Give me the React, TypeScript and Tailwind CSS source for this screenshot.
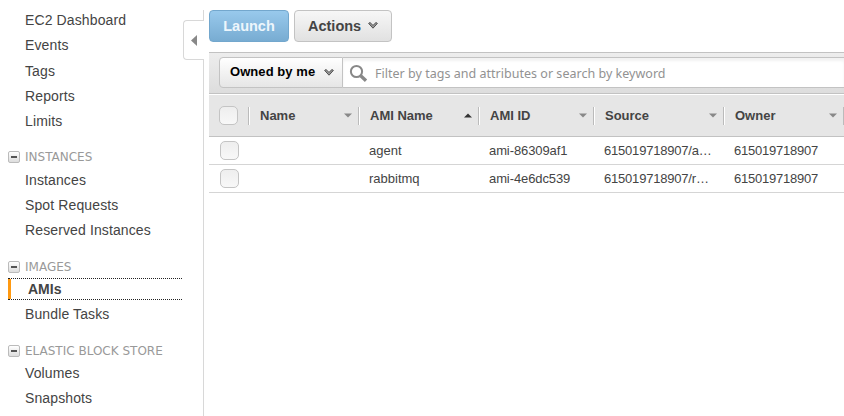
import React from "react";

function Item({ children, gap = "h-[25px]", tracking = "tracking-[.12px]" }: { children: React.ReactNode; gap?: string; tracking?: string }) {
  return <a className={`flex items-center pl-[25px] text-[14px] text-[#444] ${tracking} ${gap}`}>{children}</a>;
}

function Group({ title }: { title: string }) {
  return (
    <div className="flex h-[24px] items-center pl-2">
      <span className="flex size-3 items-center justify-center rounded-[2px] border border-[#bbb] bg-linear-to-b from-white to-[#ddd]">
        <span className="h-[2px] w-[6px] bg-[#555]" />
      </span>
      <span className="ml-[5px] font-['DejaVu_Sans',sans-serif] text-[12px] leading-none text-[#999]">{title}</span>
    </div>
  );
}

function Chevron() {
  return (
    <svg width="10" height="7" viewBox="0 0 10 7" className="-mt-px block">
      <path d="M.6 1.4 2 .5 5 3.4 8 .5l1.4.9L5 6.2z" fill="#999" stroke="#444" strokeWidth=".9" />
    </svg>
  );
}

function Sort({ up = false }: { up?: boolean }) {
  return (
    <svg width="8" height="5" viewBox="0 0 8 5" className="mr-[6px] block">
      {up ? <path d="M0 4.5h8L4 .5z" fill="#333" /> : <path d="M0 .5h8L4 4.5z" fill="#888" />}
    </svg>
  );
}

function Check() {
  return <span className="block size-[19px] rounded-[5px] border border-[#c4c4c4] bg-linear-to-b from-[#eee] to-[#f8f8f8]" />;
}

function Head({ label, width, up }: { label: string; width: string; up?: boolean }) {
  return (
    <div className={`flex h-[18px] shrink-0 items-center justify-between border-l border-[#bbb] pl-[11px] shadow-[inset_1px_0_#fff] ${width}`}>
      <span>{label}</span>
      <Sort up={up} />
    </div>
  );
}

function Row({ name, id, source }: { name: string; id: string; source: string }) {
  return (
    <div className="flex h-[28px] items-center border-b border-[#d5d5d5] pl-[11px] text-[13px] text-[#444]">
      <div className="w-[149px]"><Check /></div>
      <span className="w-[120px]">{name}</span>
      <span className="w-[115px] tracking-[-.1px]">{id}</span>
      <span className="w-[130px] tracking-[-.2px]">{source}</span>
      <span className="tracking-[-.23px]">615019718907</span>
    </div>
  );
}

export default function App() {
  return (
    <div className="flex h-[416px] w-[844px] overflow-hidden bg-white font-['Liberation_Sans',Arial,sans-serif]">
      <aside className="flex h-full w-[204px] shrink-0">
        <nav className="w-[183px] shrink-0 pt-[8px]">
          <Item>EC2 Dashboard</Item>
          <Item>Events</Item>
          <div className="h-px" />
          <Item>Tags</Item>
          <Item>Reports</Item>
          <Item>Limits</Item>
          <div className="h-[11px]" />
          <Group title="INSTANCES" />
          <div className="-mt-px"><Item>Instances</Item></div>
          <Item>Spot Requests</Item>
          <Item>Reserved Instances</Item>
          <div className="h-[12px]" />
          <Group title="IMAGES" />
          <div className="-mt-px ml-2 mr-px h-[22px] border-y border-dotted border-[#222]">
            <a className="flex h-[20px] items-center border-l-[3px] border-[#ff9911] pl-[17px] text-[14px] font-bold text-[#444]">AMIs</a>
          </div>
          <div className="h-[2px]" />
          <Item>Bundle Tasks</Item>
          <div className="h-[12px]" />
          <Group title="ELASTIC BLOCK STORE" />
          <div className="-mt-[2px]"><Item>Volumes</Item></div>
          <Item>Snapshots</Item>
        </nav>
        <div className="flex w-[21px] flex-col pt-[10px]">
          <div className="h-[10px] shrink-0 border-r border-[#d8d8d8]" />
          <div className="flex h-[40px] shrink-0 items-center rounded-l-[4px] border border-r-0 border-[#d8d8d8] pl-[7px]">
            <svg width="6" height="11" viewBox="0 0 6 11"><path d="M6 0v11L0 5.5z" fill="#888" /></svg>
          </div>
          <div className="grow border-r border-[#d8d8d8]" />
        </div>
      </aside>
      <main className="ml-[5px] min-w-0 grow pt-[10px]">
        <div className="flex h-[32px] gap-[5px] font-bold">
          <button className="w-[80px] rounded-[4px] border border-[#73a7cd] bg-linear-to-b from-[#98c9ec] to-[#78acd2] pt-px text-[14.5px] text-[#edf6fc]">Launch</button>
          <button className="flex w-[98px] items-center rounded-[4px] border border-[#c3c3c3] bg-linear-to-b from-[#f7f7f7] to-[#e1e1e1] pl-[13px] text-[14.5px] text-[#444]">
            <span className="w-[60px] pt-[2px] text-left">Actions</span><Chevron />
          </button>
        </div>
        <div className="mt-[10px] flex h-[42px] border-y border-[#c2c2c2] bg-linear-to-b from-[#ededed] to-[#dddddd] pl-[10px] pt-[4px]">
          <button className="flex h-[31px] w-[124px] shrink-0 items-center rounded-l-[4px] border border-[#c3c3c3] bg-linear-to-b from-white to-[#e6e6e6] pl-[10px] text-[13px] font-bold text-black">
            <span className="-mt-[2px] w-[94px] text-left tracking-[.06px]">Owned by me</span><Chevron />
          </button>
          <div className="flex h-[31px] grow items-center border-y border-[#c3c3c3] bg-white pl-[6px] pt-[2px] shadow-[inset_0_3px_3px_#f2f2f2]">
            <svg width="19" height="19" viewBox="0 0 19 19" fill="none" stroke="#888">
              <circle cx="7.5" cy="7.5" r="5.6" strokeWidth="2" />
              <path d="m11.7 11.7 5.3 5" strokeWidth="3.3" />
            </svg>
            <span className="ml-[7px] whitespace-nowrap pt-px font-['Noto_Sans',sans-serif] text-[12.5px] tracking-[.02px] text-[#929292]">Filter by tags and attributes or search by keyword</span>
          </div>
        </div>
        <div className="flex h-[43px] items-center border-b border-t border-b-[#c2c2c2] border-t-white bg-[#e6e6e6] pl-[10px] text-[13px] font-bold text-[#444]">
          <div className="w-[29px] shrink-0"><Check /></div>
          <Head label="Name" width="w-[110px]" />
          <Head label="AMI Name" width="w-[120px]" up />
          <Head label="AMI ID" width="w-[115px]" />
          <Head label="Source" width="w-[130px]" />
          <Head label="Owner" width="w-[120px]" />
          <i className="h-[18px] border-l border-[#bbb]" />
        </div>
        <Row name="agent" id="ami-86309af1" source="615019718907/a…" />
        <Row name="rabbitmq" id="ami-4e6dc539" source="615019718907/r…" />
      </main>
    </div>
  );
}
